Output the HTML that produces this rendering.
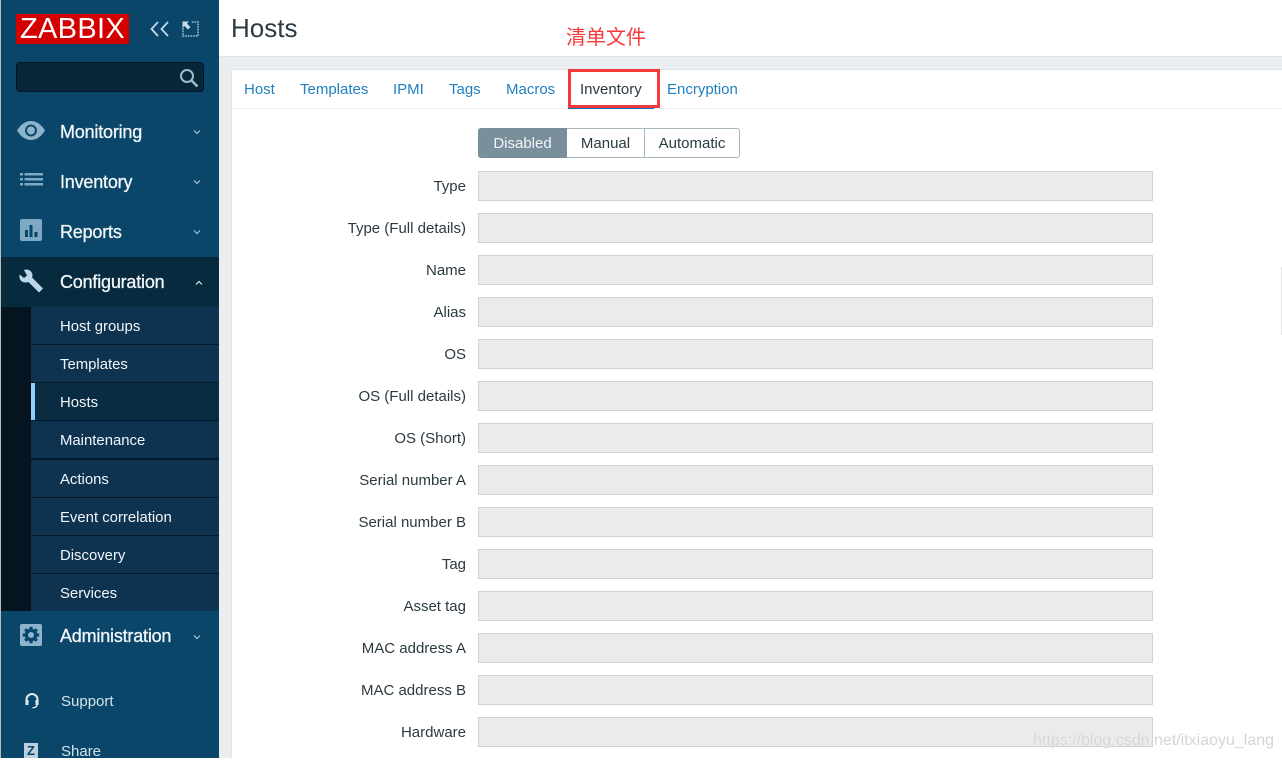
<!DOCTYPE html>
<html><head><meta charset="utf-8">
<style>
html,body{margin:0;padding:0;width:1282px;height:758px;overflow:hidden;background:#fff;font-family:"Liberation Sans","Noto Sans CJK SC",sans-serif;}
div,span,svg{position:absolute;white-space:nowrap;}
.m{left:60px;font-size:18px;color:#f2f6f9;line-height:22px;-webkit-text-stroke:.3px #f2f6f9;letter-spacing:-.2px}
.s{left:60px;font-size:14.9px;color:#f2f6f9;line-height:18px;}
.b{left:31px;width:188px;height:1px;background:#04192a}
.t{top:81px;font-size:15px;line-height:18px;color:#1f7fc0}
.l{right:816px;font-size:15px;line-height:18px;color:#2b3a42}
.f{left:478px;width:673px;height:28px;background:#ebebeb;border:1px solid #cdd5d9}
</style></head><body>
<div style="left:0;top:0;width:1px;height:758px;background:#b9bcbd"></div>
<div style="left:1px;top:0;width:218px;height:758px;background:#0a4669"></div>
<div style="left:219px;top:0;width:1063px;height:758px;background:#ebeef0"></div>
<div style="left:219px;top:0;width:1063px;height:56px;background:#fff;border-bottom:1px solid #dfe4e7"></div>
<div style="left:231px;top:69px;width:1051px;height:689px;background:#fff;border-top:1px solid #dfe4e7;border-left:1px solid #dfe4e7;box-sizing:border-box"></div>
<div style="left:232px;top:108px;width:1050px;height:1px;background:#ebeef0"></div>

<div style="left:16px;top:14px;width:113px;height:30px;background:#d40000;color:#fff;font-size:29px;line-height:31px;text-align:center;letter-spacing:.3px">ZABBIX</div>
<svg style="left:150px;top:20px" width="20" height="18" viewBox="0 0 20 18" fill="none" stroke="#c3d7e4" stroke-width="1.800"><path d="M8 2L1.500 9 8 16M18 2l-6.500 7 6.500 7"/></svg>
<svg style="left:182px;top:21px" width="17" height="16" viewBox="0 0 17 16" fill="none"><path d="M1 7v8h15V1H9" stroke="#8fb0c6" stroke-width="1.800" stroke-dasharray="1.600 1"/><path d="M0.500 0.500h6.500L5 2.500 8.500 6 6 8.500 2.500 5 0.500 7z" fill="#c7dbe8"/></svg>
<div style="left:16px;top:62px;width:186px;height:28px;background:#07263a;border:1px solid #031521;border-radius:4px"></div>
<svg style="left:179px;top:68px" width="20" height="20" viewBox="0 0 20 20" fill="none" stroke="#9fbccd" stroke-width="2"><circle cx="8" cy="8" r="6"/><path d="M12.500 12.500L18.500 18.500" stroke-width="2.600"/></svg>

<div class="m" style="top:121px">Monitoring</div>
<div class="m" style="top:171px">Inventory</div>
<div class="m" style="top:221px">Reports</div>
<svg style="left:17px;top:121px" width="28" height="20" viewBox="0 0 28 20"><path d="M0 9.500C4 3 9 0 14 0s10 3 14 9.500C24 16 19 19 14 19S4 16 0 9.500z" fill="#8db4cd"/><circle cx="14" cy="9.500" r="6" fill="#0a4669"/><circle cx="14" cy="9.500" r="4" fill="#8db4cd"/></svg>
<svg style="left:19px;top:172px" width="25" height="16" viewBox="0 0 25 16" fill="#7fa8c3"><rect x="1" y="1" width="3" height="2.500"/><rect x="1" y="6" width="3" height="2.500"/><rect x="1" y="11" width="3" height="2.500"/><rect x="5.500" y="1" width="18.500" height="2.500"/><rect x="5.500" y="6" width="18.500" height="2.500"/><rect x="5.500" y="11" width="18.500" height="2.500"/></svg>
<svg style="left:20px;top:219px" width="22" height="22" viewBox="0 0 22 22"><rect width="22" height="22" rx="2" fill="#7fa8c3"/><path d="M5 11h3v7H5zM9.500 6h3v12h-3zM14.500 13h3v5h-3z" fill="#0a4669"/></svg>
<svg style="left:192px;top:129px" width="10" height="6" viewBox="0 0 10 6" fill="none" stroke="#a9c4d5" stroke-width="1.200"><path d="M2 1.500l3 3 3-3"/></svg>
<svg style="left:192px;top:179px" width="10" height="6" viewBox="0 0 10 6" fill="none" stroke="#a9c4d5" stroke-width="1.200"><path d="M2 1.500l3 3 3-3"/></svg>
<svg style="left:192px;top:229px" width="10" height="6" viewBox="0 0 10 6" fill="none" stroke="#a9c4d5" stroke-width="1.200"><path d="M2 1.500l3 3 3-3"/></svg>

<div style="left:1px;top:257px;width:218px;height:50px;background:#082a3e"></div>
<svg style="left:18px;top:268px" width="26" height="26" viewBox="0 0 26 26"><path d="M1.500 6.500L6 10l3-2.500-3-5.500c3.500-1.500 8 .5 8.500 5 0 1-.2 2-.5 2.500L25 20.500 21 24.500 10.500 14c-4 1.500-10 0-9-7.500z" fill="#bcd7ea"/></svg>
<div class="m" style="top:271px">Configuration</div>
<svg style="left:194px;top:280px" width="10" height="6" viewBox="0 0 10 6" fill="none" stroke="#d8e6ef" stroke-width="1.200"><path d="M2 4.500l3-3 3 3"/></svg>

<div style="left:1px;top:307px;width:30px;height:304px;background:#04151f"></div>
<div style="left:31px;top:307px;width:188px;height:304px;background:#0e3350"></div>
<div style="left:31px;top:383px;width:188px;height:37px;background:#0a2c42"></div>
<div style="left:31px;top:383px;width:4px;height:37px;background:#8fd0fb"></div>
<div class="b" style="top:344px"></div><div class="b" style="top:382px"></div><div class="b" style="top:420px"></div><div class="b" style="top:458px;height:2px"></div><div class="b" style="top:497px"></div><div class="b" style="top:535px"></div><div class="b" style="top:573px"></div>
<div class="s" style="top:318px">Host groups</div>
<div class="s" style="top:356px">Templates</div>
<div class="s" style="top:394px">Hosts</div>
<div class="s" style="top:432px">Maintenance</div>
<div class="s" style="top:471px">Actions</div>
<div class="s" style="top:509px">Event correlation</div>
<div class="s" style="top:547px">Discovery</div>
<div class="s" style="top:585px">Services</div>

<svg style="left:20px;top:624px" width="22" height="22" viewBox="0 0 22 22"><rect width="22" height="22" rx="2" fill="#8db4cd"/><circle cx="11" cy="11" r="6.300" fill="#0a4669"/><path d="M11 2.800v16.400M2.800 11h16.400M5.200 5.200l11.600 11.600M16.800 5.200L5.200 16.800" stroke="#0a4669" stroke-width="3.200"/><circle cx="11" cy="11" r="3" fill="#8db4cd"/></svg>
<div class="m" style="top:625px">Administration</div>
<svg style="left:192px;top:634px" width="10" height="6" viewBox="0 0 10 6" fill="none" stroke="#a9c4d5" stroke-width="1.200"><path d="M2 1.500l3 3 3-3"/></svg>
<svg style="left:25px;top:693px" width="14" height="16" viewBox="0 0 14 16" fill="none" stroke="#e0ebf2" stroke-width="2"><path d="M1.500 9V6.500a5.500 5.500 0 0 1 11 0V9"/><path d="M.5 7h3v5h-3zM10.500 7h3v5h-3z" fill="#e0ebf2" stroke="none"/><path d="M12 12c0 1.800-2 2.700-4.500 2.700" stroke-width="1.400"/></svg>
<div class="s" style="left:61px;top:693px;color:#d5e3ec;font-size:15px">Support</div>
<div style="left:24px;top:743px;width:14px;height:15px;background:#b9d0de;color:#0a4669;font-weight:bold;font-size:13px;line-height:15px;text-align:center">Z</div>
<div class="s" style="left:61px;top:743px;color:#d5e3ec;font-size:15px">Share</div>

<div style="left:231px;top:13px;font-size:26px;line-height:30px;color:#2b3a42">Hosts</div>
<div style="left:566px;top:26px;font-size:20px;line-height:24px;color:#f5393a">清单文件</div>

<div class="t" style="left:244px">Host</div>
<div class="t" style="left:300px">Templates</div>
<div class="t" style="left:393px">IPMI</div>
<div class="t" style="left:449px">Tags</div>
<div class="t" style="left:506px">Macros</div>
<div class="t" style="left:580px;color:#2b3a42">Inventory</div>
<div class="t" style="left:667px">Encryption</div>
<div style="left:568px;top:108px;width:86px;height:1px;background:#0b70b5"></div>
<div style="left:568px;top:69px;width:86px;height:33px;border:3px solid #f5393a"></div>

<div style="left:478px;top:128px;width:262px;height:30px;box-sizing:border-box;border:1px solid #a8b6bf;border-radius:3px;background:#fff"></div>
<div style="left:478px;top:128px;width:89px;height:30px;background:#7a8f9c;border-radius:3px 0 0 3px;color:#f2f6f9;font-size:15px;line-height:31px;text-align:center">Disabled</div>
<div style="left:644px;top:129px;width:1px;height:28px;background:#a8b6bf"></div>
<div style="left:567px;top:128px;width:77px;font-size:15px;line-height:31px;text-align:center;color:#2b3a42">Manual</div>
<div style="left:645px;top:128px;width:94px;font-size:15px;line-height:31px;text-align:center;color:#2b3a42">Automatic</div>

<div class="l" style="top:178px">Type</div><div class="f" style="top:171px"></div>
<div class="l" style="top:220px">Type (Full details)</div><div class="f" style="top:213px"></div>
<div class="l" style="top:262px">Name</div><div class="f" style="top:255px"></div>
<div class="l" style="top:304px">Alias</div><div class="f" style="top:297px"></div>
<div class="l" style="top:346px">OS</div><div class="f" style="top:339px"></div>
<div class="l" style="top:388px">OS (Full details)</div><div class="f" style="top:381px"></div>
<div class="l" style="top:430px">OS (Short)</div><div class="f" style="top:423px"></div>
<div class="l" style="top:472px">Serial number A</div><div class="f" style="top:465px"></div>
<div class="l" style="top:514px">Serial number B</div><div class="f" style="top:507px"></div>
<div class="l" style="top:556px">Tag</div><div class="f" style="top:549px"></div>
<div class="l" style="top:598px">Asset tag</div><div class="f" style="top:591px"></div>
<div class="l" style="top:640px">MAC address A</div><div class="f" style="top:633px"></div>
<div class="l" style="top:682px">MAC address B</div><div class="f" style="top:675px"></div>
<div class="l" style="top:724px">Hardware</div><div class="f" style="top:717px"></div>

<div style="left:1281px;top:267px;width:1px;height:68px;background:#e2e5e7"></div>
<div style="left:1033px;top:731px;font-size:16px;line-height:19px;color:rgba(205,208,210,.9);text-shadow:0 0 1px #fff">https://blog.csdn.net/itxiaoyu_lang</div>
</body></html>
